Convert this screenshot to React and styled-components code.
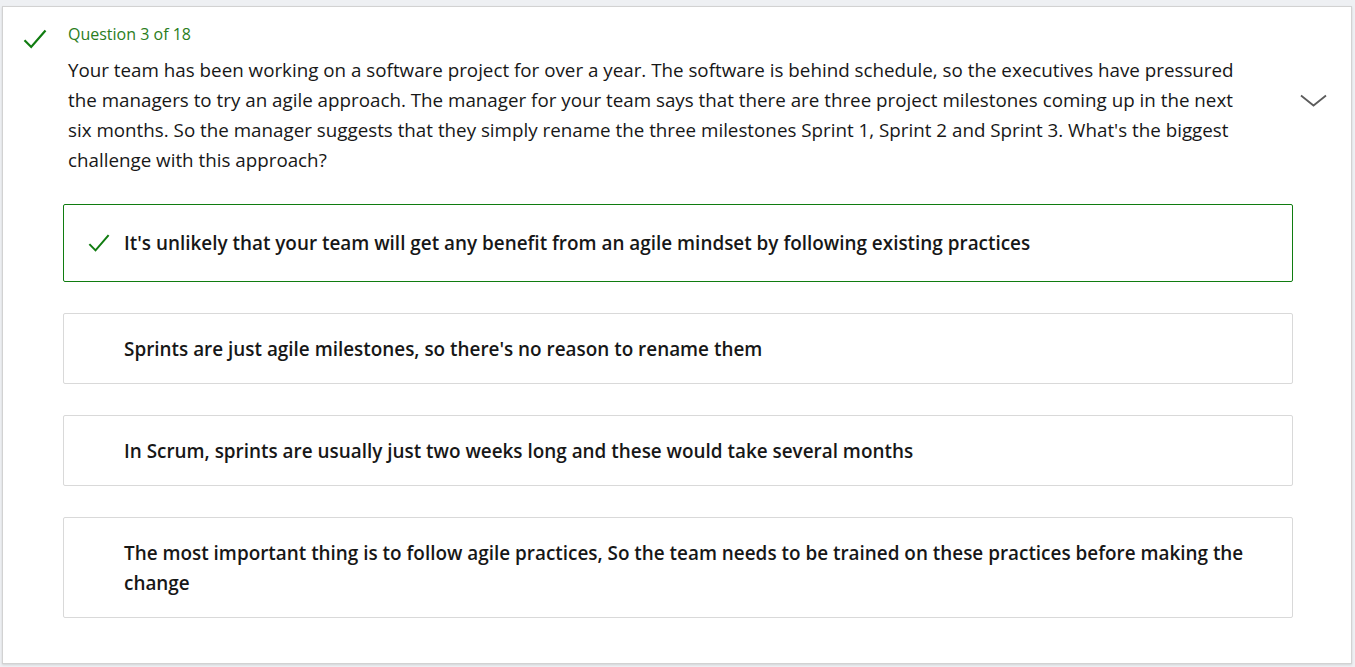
import { styled, createGlobalStyle } from "styled-components";

const GlobalStyle = createGlobalStyle`
  html, body {
    margin: 0;
    padding: 0;
    background: #eef0f3;
  }
  body {
    font-family: "Open Sans", "Noto Sans", sans-serif;
    color: #171717;
  }
`;

const question = {
  number: 3,
  total: 18,
  text: "Your team has been working on a software project for over a year. The software is behind schedule, so the executives have pressured the managers to try an agile approach. The manager for your team says that there are three project milestones coming up in the next six months. So the manager suggests that they simply rename the three milestones Sprint 1, Sprint 2 and Sprint 3. What's the biggest challenge with this approach?",
  answers: [
    {
      text: "It's unlikely that your team will get any benefit from an agile mindset by following existing practices",
      correct: true,
    },
    { text: "Sprints are just agile milestones, so there's no reason to rename them" },
    { text: "In Scrum, sprints are usually just two weeks long and these would take several months" },
    {
      text: "The most important thing is to follow agile practices, So the team needs to be trained on these practices before making the change",
    },
  ],
};

const Check = ({ size = 24 }) => (
  <svg width={size} height={size} viewBox="0 0 24 24" fill="none">
    <path d="M1.5 13.2 L8.2 20 L22.5 3.5" stroke="#107c10" strokeWidth="2.2" />
  </svg>
);

const Chevron = () => (
  <svg width="27" height="13" viewBox="0 0 27 13" fill="none">
    <path d="M1 1.5 L13.5 11.5 L26 1.5" stroke="#5c5c5c" strokeWidth="1.8" />
  </svg>
);

const App = () => {
  return (
    <>
      <GlobalStyle />
      <Card>
        <StatusCol>
          <Check />
        </StatusCol>
        <MainCol>
          <Label>
            Question {question.number} of {question.total}
          </Label>
          <QuestionText>{question.text}</QuestionText>
          <Answers>
            {question.answers.map((a) => (
              <Answer key={a.text} $correct={a.correct}>
                <AnswerIcon>{a.correct && <Check size={22} />}</AnswerIcon>
                <AnswerText>{a.text}</AnswerText>
              </Answer>
            ))}
          </Answers>
        </MainCol>
        <ToggleCol>
          <Chevron />
        </ToggleCol>
      </Card>
    </>
  );
};
export default App;

const Card = styled.div`
  display: flex;
  margin: 6px 3px 3px 2px;
  height: 658px;
  box-sizing: border-box;
  background: #fff;
  border: 1px solid #d2d2d2;
  box-shadow: 0 1px 2px rgba(0, 0, 0, 0.12);
`;

const StatusCol = styled.div`
  width: 60px;
  flex: none;
  padding: 20px 0 0 20px;
  box-sizing: border-box;
`;

const MainCol = styled.div`
  width: 1230px;
  flex: none;
  padding-top: 17px;
`;

const Label = styled.div`
  padding-left: 5px;
  font-size: 16px;
  line-height: 21px;
  color: #2a7d1c;
`;

const QuestionText = styled.p`
  margin: 10px 0 0;
  padding-left: 5px;
  width: 1185px;
  font-size: 18.8px;
  line-height: 30px;
`;

const Answers = styled.div`
  display: flex;
  flex-direction: column;
  gap: 31px;
  margin-top: 29px;
`;

const Answer = styled.div`
  display: flex;
  align-items: center;
  min-height: ${(p) => (p.$correct ? "78px" : "71px")};
  box-sizing: border-box;
  padding: 19.5px 40px 19.5px 24px;
  border: 1px solid ${(p) => (p.$correct ? "#107c10" : "#d9d9d9")};
  border-radius: 2px;
`;

const AnswerIcon = styled.div`
  width: 36px;
  flex: none;
  display: flex;
  align-items: center;
`;

const AnswerText = styled.div`
  font-size: 18.9px;
  font-weight: 600;
  line-height: 30px;
`;

const ToggleCol = styled.div`
  flex: 1;
  display: flex;
  justify-content: center;
  padding: 87px 18px 0 0;
`;
